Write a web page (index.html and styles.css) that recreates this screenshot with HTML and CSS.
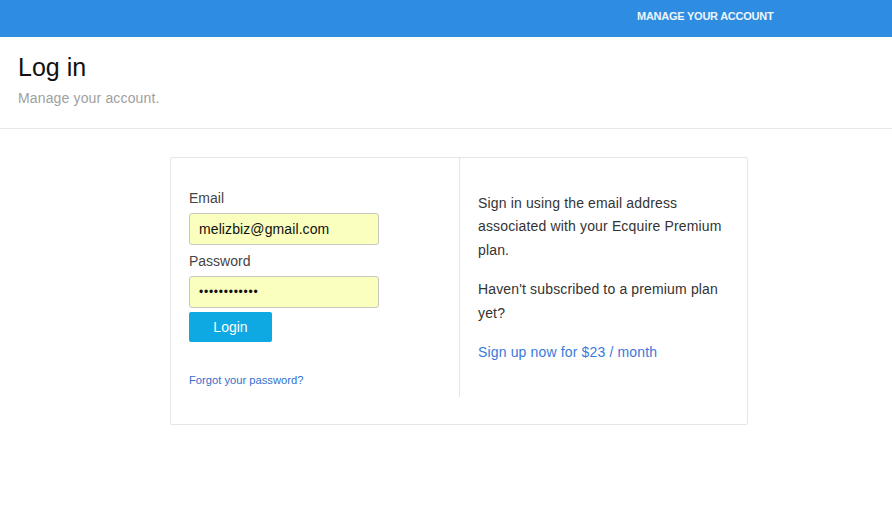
FILE: index.html
```html
<!DOCTYPE html>
<html>
<head>
<meta charset="utf-8">
<link rel="stylesheet" href="styles.css">
</head>
<body>
<div class="topbar">
  <a class="topnav" href="#">MANAGE YOUR ACCOUNT</a>
</div>
<div class="page-header">
  <h1 class="title">Log in</h1>
  <p class="subtitle">Manage your account.</p>
</div>
<div class="card">
  <div class="card-row">
    <div class="col-form">
      <label class="field-label">Email</label>
      <div class="field">melizbiz@gmail.com</div>
      <label class="field-label">Password</label>
      <div class="field field-pass">••••••••••••</div>
      <button class="btn-login">Login</button>
      <a class="forgot" href="#">Forgot your password?</a>
    </div>
    <div class="col-info">
      <p class="info">Sign in using the email address associated with your Ecquire Premium plan.</p>
      <p class="info">Haven't subscribed to a premium plan yet?</p>
      <a class="signup" href="#">Sign up now for $23 / month</a>
    </div>
  </div>
</div>
</body>
</html>
```
FILE: styles.css
```css
* { box-sizing: border-box; }
body {
  margin: 0;
  font-family: "Liberation Sans", Arial, sans-serif;
  color: #333;
  background: #fff;
}
.topbar {
  height: 37px;
  background: #2e8de0;
  display: flex;
  align-items: flex-start;
}
.topnav {
  margin-left: 637px;
  margin-top: 10px;
  font-size: 11px;
  line-height: 13px;
  font-weight: bold;
  letter-spacing: -0.25px;
  color: #eef4fb;
  text-decoration: none;
}
.page-header {
  padding: 17px 18px 20px;
  border-bottom: 1px solid #e8e8e8;
}
.title {
  margin: 0;
  font-size: 25px;
  line-height: 27.5px;
  font-weight: normal;
  color: #111;
}
.subtitle {
  margin: 6.5px 0 0;
  font-size: 14px;
  line-height: 20px;
  letter-spacing: 0.15px;
  color: #a0a0a0;
}
.card {
  margin: 28px 0 0 170px;
  width: 578px;
  border: 1px solid #e6e6e6;
  border-radius: 2px;
  padding-bottom: 27px;
}
.card-row {
  display: flex;
}
.col-form {
  width: 289px;
  border-right: 1px solid #e6e6e6;
  padding: 30px 18px 8px;
  display: flex;
  flex-direction: column;
  align-items: flex-start;
}
.field-label {
  font-size: 14px;
  line-height: 20px;
  color: #444;
  margin-bottom: 5px;
}
.field {
  width: 190px;
  height: 32px;
  border: 1px solid #c9c9c1;
  border-radius: 3px;
  background: #faffbd;
  padding: 0 9px;
  font-size: 14px;
  line-height: 30px;
  letter-spacing: 0.1px;
  color: #111;
  margin-bottom: 6px;
}
.field-pass {
  font-size: 12px;
  letter-spacing: 0.75px;
  margin-bottom: 4px;
}
.btn-login {
  width: 83px;
  height: 30px;
  border: none;
  border-radius: 2px;
  background: #0ea8e2;
  color: #fff;
  font-family: "Liberation Sans", Arial, sans-serif;
  font-size: 14px;
  padding: 0;
}
.forgot {
  margin-top: 30px;
  font-size: 11.2px;
  line-height: 17px;
  color: #3470cc;
  text-decoration: none;
}
.col-info {
  flex: 1;
  padding: 34px 18px 10px;
  letter-spacing: 0.15px;
}
.info {
  margin: 0 0 16px;
  font-size: 14px;
  line-height: 23.4px;
  color: #333;
}
.signup {
  font-size: 14px;
  line-height: 23.4px;
  color: #3b7ad8;
  text-decoration: none;
}
```
